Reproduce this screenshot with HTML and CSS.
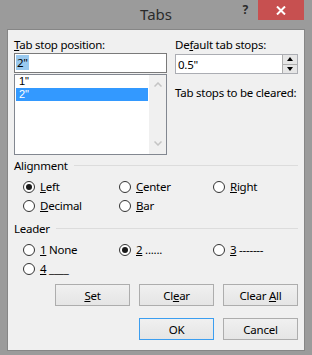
FILE: index.html
```html
<!doctype html>
<html lang="en">

<head>
    <meta charset="UTF-8" />
    <title>Tabs</title>
    <link rel="stylesheet" href="styles.css">
</head>

<body>
    <div class="window">
        <!-- Title bar -->
        <div class="titlebar">
            <div></div>
            <div class="title">Tabs</div>
            <div class="controls">
                <span class="help">?</span>
                <span class="close">
                    <svg width="10" height="9" viewBox="0 0 10 9">
                        <path d="M1 0.5 L9 8.5 M9 0.5 L1 8.5" stroke="#fff" stroke-width="2" fill="none" />
                    </svg>
                </span>
            </div>
        </div>

        <div class="client">
            <!-- Positions -->
            <div class="top">
                <div class="col">
                    <div class="label"><u>T</u>ab stop position:</div>
                    <div class="input"><span class="text-sel">2"</span></div>
                    <div class="list">
                        <div class="items">
                            <div class="item">1"</div>
                            <div class="item active">2"</div>
                        </div>
                        <div class="scroll">
                            <svg width="8" height="5" viewBox="0 0 8 5">
                                <path d="M0.5 4.5 L4 1 L7.5 4.5" stroke="#c4c4c4" stroke-width="1.5" fill="none" />
                            </svg>
                            <svg width="8" height="5" viewBox="0 0 8 5">
                                <path d="M0.5 0.5 L4 4 L7.5 0.5" stroke="#c4c4c4" stroke-width="1.5" fill="none" />
                            </svg>
                        </div>
                    </div>
                </div>
                <div class="col">
                    <div class="label">De<u>f</u>ault tab stops:</div>
                    <div class="spin">
                        <span class="spin-value">0.5"</span>
                        <div class="spin-buttons">
                            <span class="spin-btn"><i class="arrow-up"></i></span>
                            <span class="spin-btn"><i class="arrow-down"></i></span>
                        </div>
                    </div>
                    <div class="label cleared">Tab stops to be cleared:</div>
                </div>
            </div>

            <!-- Alignment -->
            <div class="group-title">Alignment</div>
            <div class="radios">
                <div class="radio checked"><span class="dot"></span><u>L</u>eft</div>
                <div class="radio"><span class="dot"></span><u>C</u>enter</div>
                <div class="radio"><span class="dot"></span><u>R</u>ight</div>
                <div class="radio"><span class="dot"></span><u>D</u>ecimal</div>
                <div class="radio"><span class="dot"></span><u>B</u>ar</div>
            </div>

            <!-- Leader -->
            <div class="group-title leader">Leader</div>
            <div class="radios">
                <div class="radio"><span class="dot"></span><u>1</u>&nbsp;None</div>
                <div class="radio checked"><span class="dot"></span><u>2</u>&nbsp;......</div>
                <div class="radio"><span class="dot"></span><u>3</u>&nbsp;-------</div>
                <div class="radio"><span class="dot"></span><u>4</u>&nbsp;____</div>
            </div>

            <!-- Buttons -->
            <div class="buttons">
                <button type="button" class="btn"><u>S</u>et</button>
                <button type="button" class="btn">Cl<u>e</u>ar</button>
                <button type="button" class="btn">Clear <u>A</u>ll</button>
            </div>
            <div class="buttons footer">
                <button type="button" class="btn default">OK</button>
                <button type="button" class="btn">Cancel</button>
            </div>
        </div>
    </div>
</body>

</html>
```

FILE: styles.css
```css
body {
    margin: 0;
    font-family: 'Noto Sans', 'Liberation Sans', sans-serif;
    font-size: 11.5px;
    letter-spacing: -0.25px;
    color: #000;
}

.window {
    width: 312px;
    height: 355px;
    box-sizing: border-box;
    background: #9b9b9b;
    padding: 0 7px 4px 7px;
    display: flex;
    flex-direction: column;
}

.titlebar {
    height: 29px;
    display: grid;
    grid-template-columns: 1fr auto 1fr;
    align-items: start;
}

.title {
    font-size: 15px;
    letter-spacing: 0;
    line-height: 29px;
    color: #2b2b2b;
}

.controls {
    display: flex;
    justify-content: flex-end;
    align-items: flex-start;
}

.help {
    font-weight: bold;
    font-size: 12px;
    line-height: 20px;
    color: #2b2b2b;
    margin-right: 10px;
}

.close {
    width: 46px;
    height: 20px;
    margin-right: 1px;
    background: #c75050;
    display: flex;
    align-items: center;
    justify-content: center;
}

.client {
    flex: 1;
    background: #f0f0f0;
    border: 1px solid #868686;
    padding: 7px 6px 0 6px;
}

.label {
    line-height: 15px;
    height: 15px;
    white-space: nowrap;
}

.top {
    display: grid;
    grid-template-columns: 153px 123px;
    column-gap: 8px;
}

.input {
    margin-top: 1px;
    height: 20px;
    box-sizing: border-box;
    border: 1px solid #7a7a7a;
    background: #fff;
    padding: 1px 0 0 1px;
}

.text-sel {
    display: inline-block;
    background: #99c9ef;
    padding: 0 1px;
    line-height: 15px;
}

.list {
    margin-top: 1px;
    height: 81px;
    box-sizing: border-box;
    border: 1px solid #828790;
    background: #fff;
    display: flex;
}

.items {
    flex: 1;
    padding: 0 1px;
}

.item {
    height: 13px;
    line-height: 13px;
    padding-left: 3px;
    font-family: 'Liberation Sans', sans-serif;
    font-size: 11px;
    letter-spacing: 0;
}

.item.active {
    background: #3399ff;
    color: #fff;
}

.scroll {
    width: 17px;
    background: #f0f0f0;
    display: flex;
    flex-direction: column;
    justify-content: space-between;
    align-items: center;
    padding: 7px 0 8px 0;
}

.spin {
    margin-top: 2px;
    height: 20px;
    box-sizing: border-box;
    border: 1px solid #abadb3;
    background: #fff;
    display: flex;
    align-items: center;
}

.spin-value {
    flex: 1;
    padding-left: 2px;
}

.spin-buttons {
    width: 14px;
    height: 18px;
    display: flex;
    flex-direction: column;
    border-left: 1px solid #adadad;
}

.spin-btn {
    flex: 1;
    background: #e6e6e6;
    display: flex;
    align-items: center;
    justify-content: center;
}

.spin-btn + .spin-btn {
    border-top: 1px solid #adadad;
}

.arrow-up {
    border-left: 3px solid transparent;
    border-right: 3px solid transparent;
    border-bottom: 4px solid #000;
}

.arrow-down {
    border-left: 3px solid transparent;
    border-right: 3px solid transparent;
    border-top: 4px solid #000;
}

.cleared {
    margin-top: 11px;
}

.group-title {
    margin-top: 3px;
    display: flex;
    align-items: center;
    line-height: 15px;
}

.group-title::after {
    content: '';
    flex: 1;
    height: 1px;
    background: #dcdcdc;
    margin-left: 6px;
}

.group-title.leader {
    margin-top: 6px;
}

.radios {
    margin-top: 4px;
    padding-left: 9px;
    display: grid;
    grid-template-columns: 96px 94px 1fr;
    grid-auto-rows: 19px;
}

.radio {
    display: flex;
    align-items: center;
    white-space: nowrap;
}

.dot {
    width: 12px;
    height: 12px;
    box-sizing: border-box;
    border: 1px solid #333;
    border-radius: 50%;
    background: #fff;
    margin-right: 5px;
    display: flex;
    align-items: center;
    justify-content: center;
}

.radio.checked .dot::after {
    content: '';
    width: 6px;
    height: 6px;
    border-radius: 50%;
    background: #1a1a1a;
}

.buttons {
    margin-top: 6px;
    display: flex;
    justify-content: flex-end;
    gap: 9px;
}

.buttons.footer {
    margin-top: 12px;
}

.btn {
    width: 75px;
    height: 22px;
    border: 1px solid #adadad;
    background: linear-gradient(#f0f0f0, #e5e5e5);
    font-family: inherit;
    font-size: 11.5px;
    letter-spacing: -0.25px;
    color: #000;
    padding: 0;
}

.btn.default {
    border-color: #3c9ef0;
}
```
